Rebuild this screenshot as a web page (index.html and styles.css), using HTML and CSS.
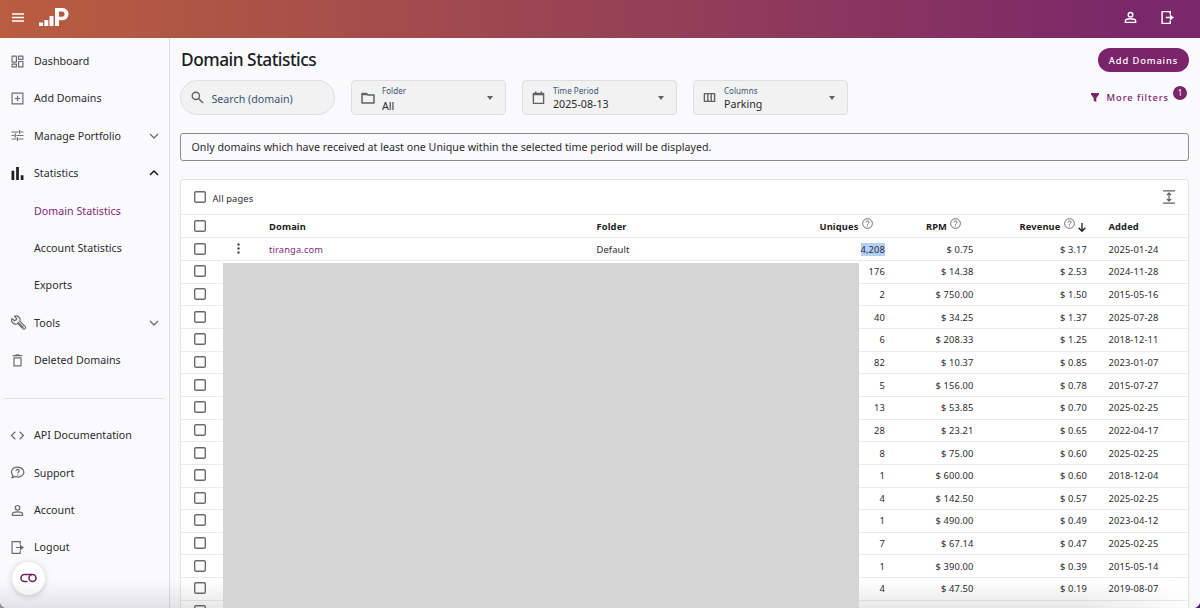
FILE: index.html
```html
<!DOCTYPE html>
<html lang="en">
<head>
  <meta charset="UTF-8">
  <meta name="viewport" content="width=device-width, initial-scale=1.0">
  <title>Domain Statistics</title>
  <link rel="stylesheet" href="styles.css">
</head>
<body>
  <header class="topbar">
    <svg class="burger" viewBox="0 0 12 9"><path d="M0 1h12M0 4.500h12M0 8h12"/></svg>
    <div class="logo">
      <svg class="bars" viewBox="0 0 15 12"><path d="M0 8.500h4V12H0zM5.300 6h4v6h-4zM10.500 2h4v10h-4z"/></svg>
      <svg class="mark" viewBox="0 0 14 18"><path fill-rule="evenodd" d="M0 0h7.500a6 6 0 0 1 0 12.200H4V18H0zM4 3.500v5.200h3a2.600 2.600 0 0 0 0-5.200z"/></svg>
    </div>
    <div class="topbar-actions">
      <svg class="icon" viewBox="0 0 24 24"><use href="#person"/></svg>
      <svg class="icon exit" viewBox="0 0 24 24"><use href="#logout"/></svg>
    </div>
  </header>

  <div class="page">
    <nav class="sidebar">
      <a class="item"><svg class="icon" viewBox="0 0 24 24"><path d="M2 2h8v11H2zM14 2h8v6h-8zM14 12h8v10h-8zM2 17h8v5H2z"/></svg>Dashboard</a>
      <a class="item"><svg class="icon" viewBox="0 0 24 24"><path d="M2 2h20v20H2zM12 7v10M7 12h10"/></svg>Add Domains</a>
      <a class="item"><svg class="icon" viewBox="0 0 24 24"><path d="M1 5.500h13M18 5.500h5M16 2v7M1 12h5M10 12h13M8 8.500v7M1 18.500h9M14 18.500h9M12 15v7"/></svg>Manage Portfolio<svg class="chevron" viewBox="0 0 10 6"><path d="M1 1l4 4 4-4"/></svg></a>
      <a class="item"><svg class="icon solid" viewBox="0 0 24 24"><path d="M1 7h5v17H1zM9.500 0h5v24h-5zM18 15h5v9h-5z"/></svg>Statistics<svg class="chevron open" viewBox="0 0 10 6"><path d="M1 5l4-4 4 4"/></svg></a>
      <a class="item sub active">Domain Statistics</a>
      <a class="item sub">Account Statistics</a>
      <a class="item sub">Exports</a>
      <a class="item"><svg class="icon wrench" viewBox="0 0 24 24"><path d="M8.500 1.500a6.300 6.300 0 0 1 5.700 8.300l8.300 8.500a2.400 2.400 0 0 1-3.500 3.500l-8.500-8.300A6.300 6.300 0 0 1 1.500 5.500L6 9.500l3.500-3.500L5.500 2.200a6 6 0 0 1 3-.7zM11 11l9 9"/></svg>Tools<svg class="chevron" viewBox="0 0 10 6"><path d="M1 1l4 4 4-4"/></svg></a>
      <a class="item"><svg class="icon" viewBox="0 0 24 24"><path d="M3 3h18M8.500 1.500h7M5.500 7h13v15h-13z"/></svg>Deleted Domains</a>
      <hr class="divider">
      <a class="item"><svg class="icon" viewBox="0 0 24 24"><path d="M8 5l-7 7 7 7M16 5l7 7-7 7"/></svg>API Documentation</a>
      <a class="item"><svg class="icon" viewBox="0 0 24 24"><path d="M4 18C-3 10 3 2 12 2s16 9 8.500 15.500c-3.500 3-8.500 3.500-12.500 2L1.500 22zM9.500 9c0-4 5.500-3.500 5.500-.3 0 2.300-2.800 2.200-2.800 4.800M12.200 15.500v2"/></svg>Support</a>
      <a class="item"><svg class="icon" viewBox="0 0 24 24"><use href="#person"/></svg>Account</a>
      <a class="item"><svg class="icon" viewBox="0 0 24 24"><use href="#logout"/></svg>Logout</a>
      <button class="consent"><svg viewBox="0 0 17 10"><path d="M7.500 8.500H4.500a3.500 3.500 0 0 1 0-7H12"/><circle cx="12.500" cy="5" r="3.500"/></svg></button>
    </nav>

    <main class="content">
      <div class="title-row">
        <h1>Domain Statistics</h1>
        <button class="add">Add Domains</button>
      </div>

      <div class="filters">
        <div class="search">
          <svg viewBox="0 0 14 14"><circle cx="5.200" cy="5.200" r="3.900"/><path d="M8 8l5 5"/></svg>
          Search (domain)
        </div>
        <div class="select">
          <svg class="folder" viewBox="0 0 14 12"><path d="M1 1.500h4.500L7 3h6v8H1zM1 2.500h5"/></svg>
          <div class="field folder-field"><label>Folder</label><span>All</span></div>
          <i class="caret"></i>
        </div>
        <div class="select">
          <svg viewBox="0 0 14 14"><path d="M1.500 2.500h11v10.800h-11zM1.500 3.700h11M4 .5v2M10 .5v2"/></svg>
          <div class="field"><label>Time Period</label><span>2025-08-13</span></div>
          <i class="caret"></i>
        </div>
        <div class="select">
          <svg viewBox="0 0 14 14"><path d="M1.500 2.800h11v8.400h-11zM5.200 2.800v8.400M8.800 2.800v8.400"/></svg>
          <div class="field"><label>Columns</label><span>Parking</span></div>
          <i class="caret"></i>
        </div>
        <div class="more">
          <svg viewBox="0 0 8 9"><path d="M0 0h8v1.500L5.300 5v4L2.700 7.800V5L0 1.500z"/></svg>
          More filters
          <span class="badge">1</span>
        </div>
      </div>

      <div class="notice">Only domains which have received at least one Unique within the selected time period will be displayed.</div>

      <section class="card">
        <div class="card-top">
          <i class="check"></i><span>All pages</span>
          <svg class="density" viewBox="0 0 12 14"><path d="M0 .8h12M0 13.200h12M6 3.500v7M3.800 5.200L6 3l2.200 2.200M3.800 8.800L6 11l2.200-2.200"/></svg>
        </div>
        <div class="row head">
          <i class="check"></i><b></b><b>Domain</b><b>Folder</b>
          <b class="num">Uniques<svg class="help" viewBox="0 0 12 12"><use href="#help"/></svg></b>
          <b class="num">RPM<svg class="help" viewBox="0 0 12 12"><use href="#help"/></svg></b>
          <b class="num sorted">Revenue<svg class="help" viewBox="0 0 12 12"><use href="#help"/></svg><svg class="arrow" viewBox="0 0 8 9"><path d="M4 0v8M.6 4.800L4 8.200l3.400-3.400"/></svg></b>
          <b class="date">Added</b>
        </div>
        <div class="row"><i class="check"></i><svg class="dots" viewBox="0 0 3 11"><circle cx="1.500" cy="1.500" r="1.200"/><circle cx="1.500" cy="5.500" r="1.200"/><circle cx="1.500" cy="9.500" r="1.200"/></svg><a>tiranga.com</a><span>Default</span><span class="num"><mark>4,208</mark></span><span class="num">$ 0.75</span><span class="num">$ 3.17</span><span class="date">2025-01-24</span></div>
        <div class="rows">
          <div class="row"><i class="check"></i><span class="num">176</span><span class="num">$ 14.38</span><span class="num">$ 2.53</span><span class="date">2024-11-28</span></div>
          <div class="row"><i class="check"></i><span class="num">2</span><span class="num">$ 750.00</span><span class="num">$ 1.50</span><span class="date">2015-05-16</span></div>
          <div class="row"><i class="check"></i><span class="num">40</span><span class="num">$ 34.25</span><span class="num">$ 1.37</span><span class="date">2025-07-28</span></div>
          <div class="row"><i class="check"></i><span class="num">6</span><span class="num">$ 208.33</span><span class="num">$ 1.25</span><span class="date">2018-12-11</span></div>
          <div class="row"><i class="check"></i><span class="num">82</span><span class="num">$ 10.37</span><span class="num">$ 0.85</span><span class="date">2023-01-07</span></div>
          <div class="row"><i class="check"></i><span class="num">5</span><span class="num">$ 156.00</span><span class="num">$ 0.78</span><span class="date">2015-07-27</span></div>
          <div class="row"><i class="check"></i><span class="num">13</span><span class="num">$ 53.85</span><span class="num">$ 0.70</span><span class="date">2025-02-25</span></div>
          <div class="row"><i class="check"></i><span class="num">28</span><span class="num">$ 23.21</span><span class="num">$ 0.65</span><span class="date">2022-04-17</span></div>
          <div class="row"><i class="check"></i><span class="num">8</span><span class="num">$ 75.00</span><span class="num">$ 0.60</span><span class="date">2025-02-25</span></div>
          <div class="row"><i class="check"></i><span class="num">1</span><span class="num">$ 600.00</span><span class="num">$ 0.60</span><span class="date">2018-12-04</span></div>
          <div class="row"><i class="check"></i><span class="num">4</span><span class="num">$ 142.50</span><span class="num">$ 0.57</span><span class="date">2025-02-25</span></div>
          <div class="row"><i class="check"></i><span class="num">1</span><span class="num">$ 490.00</span><span class="num">$ 0.49</span><span class="date">2023-04-12</span></div>
          <div class="row"><i class="check"></i><span class="num">7</span><span class="num">$ 67.14</span><span class="num">$ 0.47</span><span class="date">2025-02-25</span></div>
          <div class="row"><i class="check"></i><span class="num">1</span><span class="num">$ 390.00</span><span class="num">$ 0.39</span><span class="date">2015-05-14</span></div>
          <div class="row"><i class="check"></i><span class="num">4</span><span class="num">$ 47.50</span><span class="num">$ 0.19</span><span class="date">2019-08-07</span></div>
          <div class="row"><i class="check"></i></div>
          <div class="redacted"></div>
        </div>
      </section>
    </main>
  </div>

  <div class="fade"></div>
  <div class="corner left"></div>
  <div class="corner right"></div>

  <!-- shared icons -->
  <svg class="defs">
    <symbol id="person" viewBox="0 0 24 24"><circle cx="12" cy="7" r="4.200"/><path d="M2.500 21v-2.500c0-5.500 19-5.500 19 0V21z"/></symbol>
    <symbol id="logout" viewBox="0 0 24 24"><path d="M17 6.500V1H2v22h15v-5.500M9 12h9"/><path class="fill" d="M16.500 6.500L24 12l-7.500 5.500z"/></symbol>
    <symbol id="help" viewBox="0 0 12 12"><circle cx="6" cy="6" r="5.300"/><path d="M4.400 4.800c0-2.300 3.300-2.100 3.300-.1C7.700 6 6 5.900 6 7.400M6 8.300v1"/></symbol>
  </svg>
</body>
</html>
```
FILE: styles.css
```css
* {
  box-sizing: border-box;
}
body {
  margin: 0;
  height: 608px;
  overflow: hidden;
  position: relative;
  background-color: #fafafd;
  color: #2b2b2f;
  font-family: "Noto Sans", sans-serif;
  font-size: 10.67px;
}
svg {
  fill: none;
  stroke: currentColor;
  stroke-linejoin: round;
  flex-shrink: 0;
  overflow: visible;
}
button {
  border: 0;
  padding: 0;
  font-family: inherit;
}
.defs {
  position: absolute;
  width: 0;
  height: 0;
}
.fill {
  fill: currentColor;
  stroke: none;
}

/* top bar */
.topbar {
  height: 37.5px;
  display: flex;
  align-items: center;
  padding: 0 26px 3px 12px;
  color: #fff;
  background: linear-gradient(90deg, #b95c40 0%, #ae5545 17%, #7b286a 94%, #7b286a 100%);
}
.burger {
  width: 12px;
  height: 9px;
  stroke-width: 1.3;
}
.logo {
  display: flex;
  align-items: flex-end;
  margin-left: 15px;
}
.logo svg {
  fill: #fff;
  stroke: none;
}
.bars {
  width: 15px;
  height: 12px;
}
.mark {
  width: 14px;
  height: 18px;
  margin-left: 1px;
}
.topbar-actions {
  margin-left: auto;
  display: flex;
  align-items: center;
  gap: 24px;
}
.icon {
  width: 13px;
  height: 13px;
  stroke-width: 2.2;
  color: #6c6c70;
}
.topbar-actions .icon {
  color: #fff;
  stroke-width: 2.7;
}

/* sidebar */
.page {
  display: flex;
}
.sidebar {
  width: 170px;
  height: 570.5px;
  flex-shrink: 0;
  padding-top: 4.9px;
  border-right: 1px solid #dcdce0;
  position: relative;
}
.item {
  display: flex;
  align-items: center;
  height: 37.4px;
  padding: 0 10.5px 0 11px;
  gap: 10px;
  letter-spacing: 0.02px;
}
.sub {
  padding-left: 34px;
}
.active {
  color: #80287a;
}
.icon.solid {
  fill: #1d1d1f;
  stroke: none;
}
.wrench {
  width: 15px;
  height: 15px;
  margin-right: -2px;
  stroke-width: 1.9;
}
.chevron {
  width: 10px;
  height: 6px;
  margin-left: auto;
  color: #6c6c70;
  stroke-width: 1.3;
}
.open {
  color: #1d1d1f;
  stroke-width: 1.6;
}
.divider {
  margin: 19px 5px 17.7px 4px;
  border: 0;
  border-top: 1px solid #e2e2e5;
}
.consent {
  position: absolute;
  left: 12px;
  top: 524px;
  width: 33px;
  height: 33px;
  border-radius: 50%;
  background-color: #fff;
  color: #71245f;
  box-shadow: 0 1px 6px rgba(0, 0, 0, 0.2);
  display: flex;
  align-items: center;
  justify-content: center;
}
.consent svg {
  width: 17px;
  height: 10px;
  stroke-width: 1.6;
}

/* content */
.content {
  flex: 1;
  padding: 10px 11px 0 10px;
}
.title-row {
  display: flex;
  align-items: center;
  justify-content: space-between;
  height: 25px;
}
h1 {
  margin: 0;
  padding: 0 0 2px 1px;
  font-size: 17.33px;
  font-weight: 500;
  letter-spacing: -0.5px;
  color: #1d1d1f;
}
.add {
  width: 91px;
  height: 24px;
  border-radius: 12px;
  background-color: #7b246a;
  color: #fff;
  font-size: 9.33px;
  font-weight: 500;
  letter-spacing: 0.87px;
}
.filters {
  display: flex;
  gap: 16px;
  margin-top: 7.5px;
}
.search,
.select {
  width: 155px;
  height: 35px;
  display: flex;
  align-items: center;
  background-color: #f2f2f3;
  border: 1px solid #dfdfe3;
  border-radius: 4px;
}
.search {
  border-radius: 18px;
  padding: 2px 0 0 9.5px;
  gap: 8px;
  color: #365275;
}
.search svg,
.select svg {
  width: 13px;
  height: 13px;
  color: #626266;
  stroke-width: 1.5;
}
.search svg {
  margin-top: -3px;
}
.select {
  padding: 0 12.5px 0 9px;
}
.select .folder {
  width: 14px;
  height: 12px;
}
.field {
  display: flex;
  flex-direction: column;
  margin-left: 8px;
  line-height: 14px;
}
.folder-field {
  margin-left: 7px;
  padding-top: 1px;
}
.folder-field span {
  padding-top: 2px;
}
.field label {
  font-size: 8px;
  line-height: 13px;
  color: #365275;
  letter-spacing: 0.05px;
}
.caret {
  margin-left: auto;
  border: 3.5px solid transparent;
  border-top: 4px solid #626266;
  border-bottom: 0;
}
.more {
  margin-left: auto;
  display: flex;
  align-items: center;
  height: 35px;
  padding-right: 2px;
  color: #7b246a;
  font-size: 9.33px;
  font-weight: 500;
  letter-spacing: 0.9px;
}
.more svg {
  width: 8px;
  height: 9px;
  margin-right: 8px;
  fill: #7b246a;
  stroke: none;
}
.badge {
  width: 14px;
  height: 14px;
  margin: -9px 0 0 4px;
  border-radius: 50%;
  background-color: #7b246a;
  color: #fff;
  font-size: 8px;
  font-weight: 400;
  line-height: 14px;
  letter-spacing: 0;
  text-align: center;
}
.notice {
  height: 28px;
  margin-top: 18px;
  padding-left: 10.5px;
  border: 1px solid #8b8b8f;
  border-radius: 3px;
  line-height: 26px;
  letter-spacing: 0.01px;
}

/* table */
.card {
  height: 450px;
  margin-top: 18px;
  background-color: #fff;
  border: 1px solid #e3e3e8;
  border-radius: 3px;
  font-size: 9.33px;
  letter-spacing: 0.13px;
}
.card-top {
  height: 33.9px;
  display: flex;
  align-items: center;
  padding-right: 13px;
}
.card-top span {
  padding: 3px 0 0 7px;
}
.density {
  width: 12px;
  height: 14px;
  margin-left: auto;
  color: #626266;
  stroke-width: 1.2;
}
.check {
  width: 12px;
  height: 12px;
  margin-left: 12.5px;
  border-radius: 2px;
  box-shadow: inset 0 0 0 1.4px #6b6b6e;
}
.row {
  display: grid;
  grid-template-columns: 42px 46px 327.5px 174.5px 114px 88.5px 113.5px 1fr;
  align-items: center;
  height: 22.67px;
  border-top: 1px solid #ebebee;
}
.row .check {
  margin-top: -1px;
}
.head {
  height: 23.4px;
  padding-top: 1px;
  color: #1d1d1f;
}
.num {
  text-align: right;
}
.rows {
  position: relative;
}
.rows .num:nth-child(2) {
  grid-column: 5;
}
.head .num {
  display: flex;
  justify-content: flex-end;
  align-items: center;
  padding-right: 12.5px;
}
.head .sorted {
  padding-right: 1.5px;
}
.help {
  width: 11px;
  height: 11px;
  margin: -7px 0 0 3px;
  color: #626266;
  stroke-width: 1;
}
.arrow {
  width: 8px;
  height: 9px;
  margin: 2px 0 0 3px;
  stroke-width: 1.3;
}
.date {
  padding-left: 21.5px;
}
.row a {
  color: #80287a;
}
.dots {
  width: 3px;
  height: 11px;
  margin: -1px 0 0 14px;
  fill: #4d4d50;
  stroke: none;
}
mark {
  background-color: #b3d1f7;
  color: inherit;
}
.redacted {
  position: absolute;
  z-index: 2;
  left: 42.4px;
  top: 3.5px;
  width: 636px;
  height: 350px;
  background-color: #d5d5d5;
}

/* window edges */
.fade {
  position: absolute;
  left: 0;
  right: 0;
  bottom: 0;
  height: 28px;
  background: linear-gradient(rgba(0, 0, 0, 0), rgba(0, 0, 0, 0.09));
  -webkit-mask-image: linear-gradient(90deg, #000 90%, transparent);
}
.corner {
  position: absolute;
  bottom: 0;
  width: 8px;
  height: 8px;
}
.left {
  left: 0;
  background: radial-gradient(circle at 100% 0, transparent 8px, #8d8d8f 9px);
}
.right {
  right: 0;
  background: radial-gradient(circle at 0 0, transparent 8px, #4b1d7d 9px);
}
```
